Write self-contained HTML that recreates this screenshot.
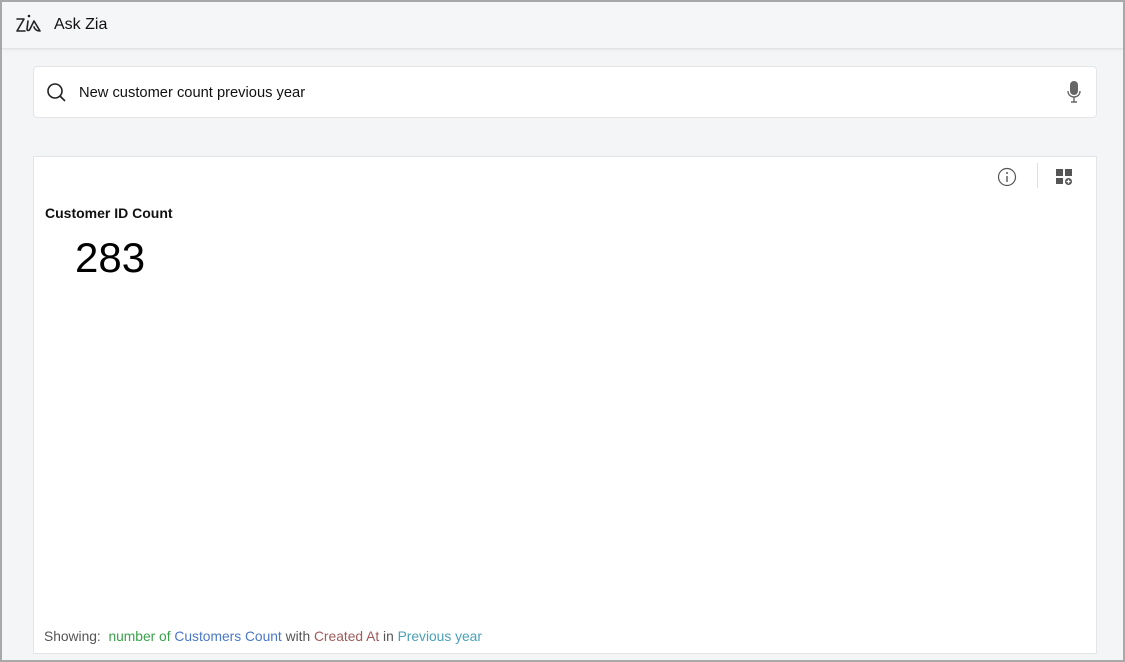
<!DOCTYPE html>
<html><head><style>
*{margin:0;padding:0;box-sizing:border-box}
body{width:1125px;height:662px;background:#a9a9a9;font-family:"Liberation Sans",sans-serif;position:relative;overflow:hidden}
.frame{position:absolute;left:2px;top:2px;width:1121px;height:658px;background:#f4f5f7}
.hdr{position:absolute;left:0;top:0;width:1121px;height:47px;background:#f5f6f8;border-bottom:1px solid #e2e3e6;box-shadow:0 1px 3px rgba(0,0,0,.06)}
.hdr .t{position:absolute;left:52px;top:14px;font-size:16px;color:#111}
.search{position:absolute;left:31px;top:64px;width:1064px;height:52px;background:#fff;border:1px solid #e4e5e8;border-radius:4px}
.search .q{position:absolute;left:45px;top:18px;font-size:14.7px;color:#111}
.card{position:absolute;left:31px;top:154px;width:1064px;height:498px;background:#fff;border:1px solid #e4e5e8}
.title{position:absolute;left:11px;top:48px;font-size:14px;font-weight:bold;color:#111}
.num{position:absolute;left:41px;top:77px;font-size:42px;color:#000}
.show{position:absolute;left:10px;top:472px;font-size:13.8px;color:#555}
.sep{position:absolute;left:1003px;top:6px;width:1px;height:25px;background:#e0e0e0}
</style></head><body>
<div class="frame">
<div class="hdr">
<svg style="position:absolute;left:12px;top:10px" width="30" height="24" viewBox="0 0 30 24" fill="none" stroke="#222" stroke-width="1.6" stroke-linecap="round" stroke-linejoin="round"><path d="M3 7h7L3 19h8"/><circle cx="15" cy="4" r="1.3" fill="#222" stroke="none"/><path d="M14 9l-1 8c0 2 2 2 3 0l4-8 6 10c-3 0-5-1-6-4"/></svg>
<div class="t">Ask Zia</div></div>
<div class="search">
<svg style="position:absolute;left:12px;top:15px" width="22" height="22" viewBox="0 0 22 22" fill="none" stroke="#222" stroke-width="1.6"><circle cx="9" cy="9" r="7"/><path d="M14 14l5 5"/></svg>
<div class="q">New customer count previous year</div>
<svg style="position:absolute;left:1032px;top:13px" width="16" height="24" viewBox="0 0 16 24"><rect x="4" y="1" width="8" height="14" rx="4" fill="#666"/><path d="M2 11c0 4 3 6 6 6s6-2 6-6M8 17v5M5 22h6" stroke="#666" stroke-width="1.4" fill="none"/></svg>
</div>
<div class="card">
<svg style="position:absolute;left:963px;top:10px" width="20" height="20" viewBox="0 0 20 20"><circle cx="10" cy="10" r="8.5" fill="none" stroke="#555" stroke-width="1.2"/><circle cx="10" cy="6" r="1" fill="#555"/><path d="M10 9v6" stroke="#555" stroke-width="1.4"/></svg>
<div class="sep"></div>
<svg style="position:absolute;left:1021px;top:11px" width="18" height="18" viewBox="0 0 18 18" fill="#555"><rect x="1" y="1" width="7" height="7"/><rect x="10" y="1" width="7" height="7"/><rect x="1" y="10" width="7" height="6"/><circle cx="13.5" cy="13.5" r="3.5"/><path d="M13.5 11.5v4M11.5 13.5h4" stroke="#fff" stroke-width="1.2"/></svg>
<div class="title">Customer ID Count</div>
<div class="num">283</div>
<div class="show">Showing:&nbsp; <span style="color:#3aa24a">number of</span> <span style="color:#4a78c8">Customers Count</span> with <span style="color:#a05a5a">Created At</span> in <span style="color:#4aa0b8">Previous year</span></div>
</div>
</div>
</body></html>
